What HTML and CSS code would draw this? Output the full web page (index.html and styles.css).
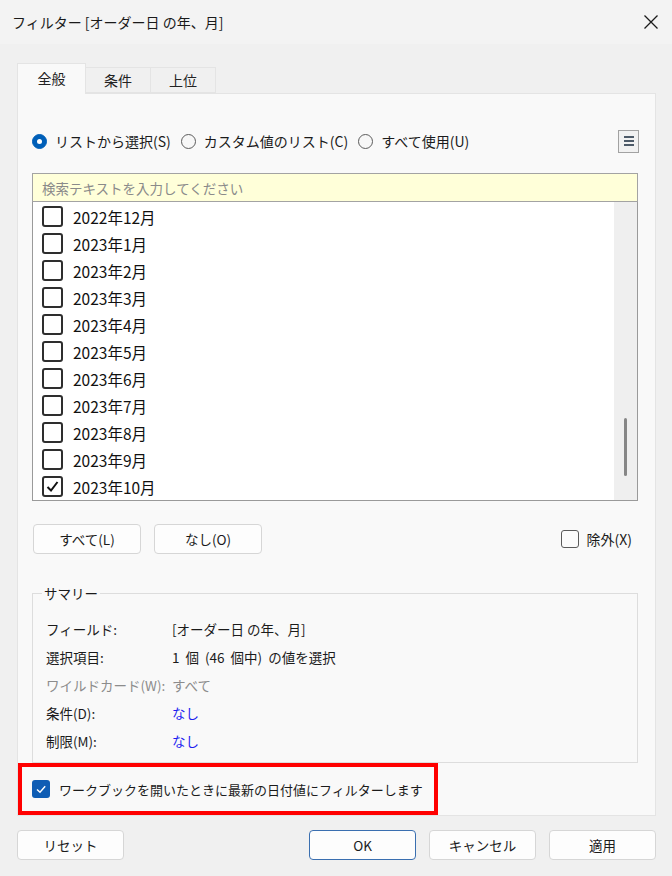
FILE: index.html
```html
<!DOCTYPE html>
<html lang="ja">
<head>
<meta charset="utf-8">
<title>フィルター</title>
<link rel="stylesheet" href="styles.css">
</head>
<body>
<div class="dialog">
  <div class="titlebar">
    <span class="title">フィルター [オーダー日 の年、月]</span>
    <svg class="close" width="16" height="16" viewBox="0 0 16 16"><path d="M1.5 1.5 L14.5 14.5 M14.5 1.5 L1.5 14.5" stroke="#1a1a1a" stroke-width="1.3" fill="none"/></svg>
  </div>
  <div class="tabs">
    <div class="tab active">全般</div>
    <div class="tab">条件</div>
    <div class="tab">上位</div>
  </div>
  <div class="panel">
    <div class="mode-row">
      <div class="radios">
        <label class="radio"><span class="rb on"></span>リストから選択(S)</label>
        <label class="radio"><span class="rb"></span>カスタム値のリスト(C)</label>
        <label class="radio"><span class="rb"></span>すべて使用(U)</label>
      </div>
      <div class="menu-btn"><span></span><span></span><span></span></div>
    </div>
    <div class="search">検索テキストを入力してください</div>
    <div class="list">
      <div class="items">
        <div class="item"><span class="cb"></span>2022年12月</div>
        <div class="item"><span class="cb"></span>2023年1月</div>
        <div class="item"><span class="cb"></span>2023年2月</div>
        <div class="item"><span class="cb"></span>2023年3月</div>
        <div class="item"><span class="cb"></span>2023年4月</div>
        <div class="item"><span class="cb"></span>2023年5月</div>
        <div class="item"><span class="cb"></span>2023年6月</div>
        <div class="item"><span class="cb"></span>2023年7月</div>
        <div class="item"><span class="cb"></span>2023年8月</div>
        <div class="item"><span class="cb"></span>2023年9月</div>
        <div class="item"><span class="cb"><svg width="17" height="17" viewBox="0 0 17 17"><path d="M3.5 9 L7 12.5 L13.5 4" stroke="#111" stroke-width="2" fill="none"/></svg></span>2023年10月</div>
      </div>
      <div class="scroll"><div class="thumb"></div></div>
    </div>
    <div class="sel-row">
      <button class="btn">すべて(L)</button>
      <button class="btn">なし(O)</button>
      <label class="exclude"><span class="cb-small"></span>除外(X)</label>
    </div>
    <fieldset class="summary">
      <legend>サマリー</legend>
      <div class="rows">
        <div class="row"><span class="k">フィールド:</span><span class="v">[オーダー日 の年、月]</span></div>
        <div class="row"><span class="k">選択項目:</span><span class="v sp">1 個 (46 個中) の値を選択</span></div>
        <div class="row dim"><span class="k">ワイルドカード(W):</span><span class="v">すべて</span></div>
        <div class="row"><span class="k">条件(D):</span><span class="v link">なし</span></div>
        <div class="row"><span class="k">制限(M):</span><span class="v link">なし</span></div>
      </div>
    </fieldset>
    <div class="highlight">
      <span class="cb-blue"><svg width="18" height="18" viewBox="0 0 18 18"><path d="M5 9.5 L8 12.3 L13.2 6.2" stroke="#fff" stroke-width="1.4" fill="none"/></svg></span>
      <span class="hl-text">ワークブックを開いたときに最新の日付値にフィルターします</span>
    </div>
  </div>
  <div class="footer">
    <button class="btn fbtn">リセット</button>
    <button class="btn fbtn ok">OK</button>
    <button class="btn fbtn">キャンセル</button>
    <button class="btn fbtn">適用</button>
  </div>
</div>
</body>
</html>
```
FILE: styles.css
```css
* { box-sizing: border-box; }
html, body { margin: 0; padding: 0; }
body {
  background: #f0f0f0;
  font-family: "Noto Sans CJK JP", "Noto Sans", sans-serif;
  color: #1b1b1b;
  font-size: 13.5px;
}
.dialog { width: 672px; height: 876px; background: #f0f0f0; }
.titlebar {
  height: 44px;
  background: #f3f3f3;
  display: flex;
  align-items: center;
  justify-content: space-between;
  padding: 0 12px 0 12px;
}
.title { font-size: 14px; color: #1a1a1a; }
.close { display: block; margin-right: 1px; }

.tabs {
  display: flex;
  align-items: flex-end;
  margin: 19px 0 0 17px;
  height: 30px;
}
.tab {
  width: 65px;
  height: 26px;
  border: 1px solid #e4e4e4;
  border-left: none;
  background: #f0f0f0;
  display: flex;
  align-items: center;
  justify-content: center;
  font-size: 14px;
  color: #222;
}
.tab.active {
  width: 69px;
  height: 31px;
  border-left: 1px solid #e4e4e4;
  border-bottom: none;
  background: #f9f9f9;
  position: relative;
  z-index: 1;
  margin-bottom: -1px;
  padding-bottom: 3px;
}

.panel {
  margin: 0 16px 0 17px;
  height: 723px;
  background: #f9f9f9;
  border: 1px solid #e4e4e4;
  padding: 35px 17px 0 14px;
}

.mode-row {
  height: 24px;
  display: flex;
  align-items: center;
  justify-content: space-between;
}
.radios { display: flex; align-items: center; gap: 10px; }
.radio { display: flex; align-items: center; gap: 8px; color: #1b1b1b; font-size: 14px; }
.rb {
  width: 15px; height: 15px;
  border-radius: 50%;
  border: 1px solid #5c5c5c;
  background: #f7f7f7;
  position: relative;
}
.rb.on { background: #005fb8; border-color: #005fb8; }
.rb.on::after {
  content: "";
  position: absolute;
  left: 4px; top: 4px;
  width: 5px; height: 5px;
  border-radius: 50%;
  background: #fff;
}
.menu-btn {
  width: 21px; height: 23px;
  border: 1.5px solid #a2a2a2;
  background: #f1f1f1;
  display: flex;
  flex-direction: column;
  align-items: center;
  justify-content: center;
  gap: 2px;
  margin-right: -1px;
}
.menu-btn span { display: block; width: 10px; height: 2px; background: #4d5a68; }

.search {
  margin-top: 20px;
  height: 29px;
  background: #ffffd9;
  border: 1.5px solid #a3a3a3;
  color: #8a8a8a;
  padding-left: 9px;
  display: flex;
  align-items: center;
  font-size: 13.5px;
}
.list {
  height: 299px;
  border: 1.5px solid #9a9a9a;
  border-top: none;
  background: #fff;
  display: flex;
}
.items { flex: 1; padding: 1px 0 0 9px; }
.item {
  height: 27px;
  display: flex;
  align-items: center;
  gap: 10px;
  font-size: 15.5px;
  color: #111;
}
.cb {
  width: 21px; height: 21px;
  border: 2px solid #2e2e2e;
  border-radius: 3px;
  background: #fff;
  display: flex;
  align-items: center;
  justify-content: center;
}
.scroll {
  width: 23px;
  background: #efefef;
  display: flex;
  flex-direction: column;
  justify-content: flex-end;
  padding-bottom: 24px;
}
.thumb { width: 3px; height: 58px; background: #868686; border-radius: 2px; margin-left: 10px; }

.sel-row {
  margin-top: 23px;
  height: 30px;
  display: flex;
  align-items: center;
  gap: 13px;
}
.btn {
  font-family: inherit;
  font-size: 13.5px;
  color: #1b1b1b;
  background: #fdfdfd;
  border: 1px solid #d6d6d6;
  border-radius: 4px;
  height: 30px;
  width: 108px;
  padding: 0;
}
.sel-row .btn:first-child { margin-left: 1px; }
.exclude {
  margin-left: auto;
  margin-right: 6px;
  display: flex;
  align-items: center;
  gap: 8px;
  font-size: 14px;
}
.cb-small {
  width: 18px; height: 18px;
  border: 1px solid #5a5a5a;
  border-radius: 3px;
  background: #fbfbfb;
}

.summary {
  margin: 29px 0 0 0;
  padding: 0 0 7px 9px;
  border: 1px solid #dddddd;
  min-width: 0;
}
.summary legend { padding: 0 2px; height: 20px; line-height: 20px; color: #1b1b1b; }
.rows { padding: 12px 0 0 4px; }
.row { height: 28px; display: flex; align-items: center; }
.row .k { width: 126px; }
.row .sp { word-spacing: 3px; }
.row.dim { color: #8c8c8c; }
.row .link { color: #1d1df0; }

.highlight {
  margin-left: -14px;
  width: 420px;
  height: 52px;
  border: 4px solid #ff0000;
  display: flex;
  align-items: center;
  padding-left: 10px;
  gap: 9px;
}
.cb-blue {
  width: 18px; height: 18px;
  border-radius: 3px;
  background: #0f5db4;
  display: block;
}
.cb-blue svg { display: block; }
.hl-text { font-size: 13px; color: #1b1b1b; }

.footer {
  margin-top: 14px;
  padding: 0 16px 0 17px;
  display: flex;
  gap: 13px;
}
.fbtn { width: 107px; }
.fbtn.ok { margin-left: auto; border-color: #3a6fb0; }
```
